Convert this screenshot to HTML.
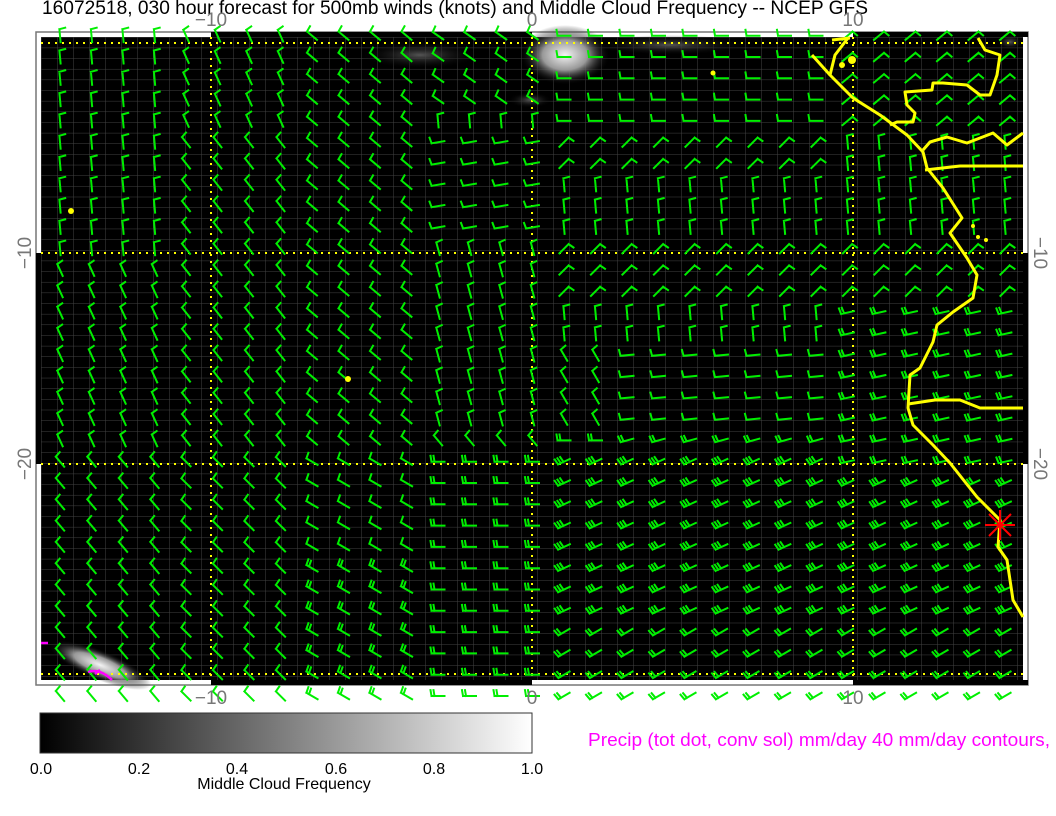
<!DOCTYPE html>
<html><head><meta charset="utf-8"><style>
html,body{margin:0;padding:0;background:#fff;width:1056px;height:816px;overflow:hidden}
svg{position:absolute;left:0;top:0}
text{font-family:"Liberation Sans",sans-serif}
</style></head><body>
<svg id="s" width="1056" height="816" viewBox="0 0 1056 816" xmlns="http://www.w3.org/2000/svg">
<defs>
<pattern id="g" width="16" height="10.65" patternUnits="userSpaceOnUse" x="41" y="37">
<path d="M0 0V10.65M0 0H16" stroke="#444" stroke-width="1" fill="none"/>
</pattern>
<radialGradient id="c1"><stop offset="0" stop-color="#f4f4f4"/><stop offset="0.5" stop-color="#999"/><stop offset="1" stop-color="#000" stop-opacity="0"/></radialGradient>
<radialGradient id="c2"><stop offset="0" stop-color="#555"/><stop offset="1" stop-color="#000" stop-opacity="0"/></radialGradient>
<linearGradient id="cb"><stop offset="0" stop-color="#000"/><stop offset="1" stop-color="#fff"/></linearGradient>
</defs>
<text x="42" y="14" font-size="19" fill="#000" textLength="826" lengthAdjust="spacingAndGlyphs">16072518, 030 hour forecast for 500mb winds (knots) and Middle Cloud Frequency -- NCEP GFS</text>
<rect x="36" y="32" width="992" height="653" fill="#fff" stroke="#777" stroke-width="1.5"/>
<rect x="41" y="37" width="982" height="643" fill="#000"/>
<rect x="211" y="32" width="321" height="5" fill="#000"/><rect x="853" y="32" width="175" height="5" fill="#000"/>
<rect x="211" y="680" width="321" height="5" fill="#000"/><rect x="853" y="680" width="175" height="5" fill="#000"/>
<rect x="36" y="253" width="5" height="211" fill="#000"/><rect x="1023" y="253" width="5" height="211" fill="#000"/>
<rect x="41" y="37" width="982" height="643" fill="url(#g)"/>
<ellipse cx="565" cy="55" rx="45" ry="30" fill="url(#c1)"/>
<ellipse cx="420" cy="55" rx="60" ry="14" fill="url(#c2)"/>
<ellipse cx="670" cy="45" rx="80" ry="10" fill="url(#c2)"/>
<ellipse cx="530" cy="100" rx="22" ry="8" fill="url(#c2)"/>
<ellipse cx="1010" cy="42" rx="14" ry="8" fill="url(#c2)"/>
<ellipse cx="100" cy="665" rx="55" ry="15" fill="url(#c1)" transform="rotate(22 100 665)"/>
<g stroke="#ffff00" stroke-width="2" stroke-dasharray="2 5" fill="none">
<path d="M211 37V680M532 37V680M853 37V680M41 43H1023M41 253H1023M41 464H1023M41 674H1023"/>
</g>
<g id="barbs" stroke="#00ee00" stroke-width="2" fill="none" stroke-linecap="square"></g>
<g stroke="#ffff00" stroke-width="3" fill="none" stroke-linejoin="round">
<polyline points="812,55 830,75 853,98 880,115 907,135 923,152 927,168 943,188 962,218 950,233 967,258 977,275 973,298 953,312 937,325 933,342 920,368 910,375 908,408 913,425 933,445 950,463 977,497 1000,520 998,547 1007,560 1013,600 1023,617"/>
<polyline points="848,38 835,55 830,75"/>
<polyline points="978,38 985,50 1000,55 997,75 990,95 980,95 967,85 943,83 933,83 932,90 905,92 907,105 915,113 913,122 897,122 890,125"/>
<polyline points="925,170 960,166 1023,166"/>
<polyline points="923,150 930,142 947,137 967,143 993,133 1007,145 1023,133"/>
<polyline points="908,404 935,400 960,400 980,408 1023,408"/>
<polyline points="832,40 850,38"/>
</g>
<g fill="#ffff00"><circle cx="71" cy="211" r="3"/><circle cx="348" cy="379" r="3"/><circle cx="713" cy="73" r="2.5"/><circle cx="973" cy="226" r="2"/><circle cx="978" cy="237" r="2"/><circle cx="986" cy="240" r="2"/><circle cx="852" cy="60" r="4"/><circle cx="842" cy="65" r="3"/></g>
<g stroke="#ff0000" stroke-width="2"><path d="M985 525H1015M1000 510V540M989 514L1011 536M989 536L1011 514"/></g>
<g stroke="#ff00ff" stroke-width="2.5" fill="none"><path d="M41 643H48M88 672Q100 668 112 680M95 674L100 670"/></g>
<g fill="#777" font-size="19" text-anchor="middle">
<text x="211" y="26">−10</text><text x="532" y="26">0</text><text x="853" y="26">10</text>
<text x="211" y="704">−10</text><text x="532" y="704">0</text><text x="853" y="704">10</text>
<text transform="translate(31 253) rotate(-90)">−10</text>
<text transform="translate(31 464) rotate(-90)">−20</text>
<text transform="translate(1034 253) rotate(90)">−10</text>
<text transform="translate(1034 464) rotate(90)">−20</text>
</g>
<rect x="40" y="713" width="492" height="40" fill="url(#cb)" stroke="#333" stroke-width="1"/>
<g font-size="16" fill="#000" text-anchor="middle">
<text x="41" y="774">0.0</text><text x="139" y="774">0.2</text><text x="237" y="774">0.4</text><text x="336" y="774">0.6</text><text x="434" y="774">0.8</text><text x="532" y="774">1.0</text>
<text x="284" y="789">Middle Cloud Frequency</text>
</g>
<text x="588" y="746" font-size="18" fill="#ff00ff" textLength="462" lengthAdjust="spacingAndGlyphs">Precip (tot dot, conv sol) mm/day 40 mm/day contours,</text>
</svg>
<script>
(function(){
var g=document.getElementById('barbs'),d='';
function field(x,y){
 if(x>830){
  if(y<140) return [-40,1];
  if(y<230) return [-95,1];
  if(y<295) return [-45,1];
  if(y<470) return [168,2];
  if(y<620) return [155,3];
  return [150,2];
 }
 if(x>540){
  if(y<135) return [180,1];
  if(y<170) return [-45,1];
  if(y<235) return [-95,1];
  if(y<295) return [-45,1];
  if(y<340) return [-95,1];
  if(y<420){ if(x<620) return [-120,1]; return [175,1];}
  if(y<460) return [x<620?180:165,2];
  if(y<620) return [155,3];
  return [150,2];
 }
 if(x>420){
  if(y<110) return [-145,1];
  if(y<130) return [-95,1];
  if(y<245) return [170,1];
  if(y<420) return [-105,1];
  if(y<460) return [-130,1];
  return [180,2];
 }
 if(x<160){
  if(y<250) return [-95,1];
  if(y<450) return [-115,1];
  return [-130,1];
 }
 if(x<300){
  if(y<140) return [-115,1];
  if(y<450) return [-128,1];
  return [-135,1];
 }
 if(y<250) return [-140,1];
 if(y<450) return [-140,1];
 return [-150,y>560?2:1];
}
for(var k=0;k<=30;k++){
 var cx=60+31.5*k;
 for(var n=-1;n<=30;n++){
  var cy=57+21.3*n;
  var f=field(cx,cy),a=f[0]*Math.PI/180,L=13;
  var dx=Math.cos(a),dy=Math.sin(a);
  var bx=cx-dx*L/2,by=cy-dy*L/2,tx=cx+dx*L/2,ty=cy+dy*L/2;
  d+='M'+bx.toFixed(1)+' '+by.toFixed(1)+'L'+tx.toFixed(1)+' '+ty.toFixed(1);
  var ba=a+80*Math.PI/180;
  for(var i=0;i<f[1];i++){
   var px=tx-dx*i*3,py=ty-dy*i*3;
   d+='M'+px.toFixed(1)+' '+py.toFixed(1)+'L'+(px+Math.cos(ba)*6).toFixed(1)+' '+(py+Math.sin(ba)*6).toFixed(1);
  }
 }
}
var p=document.createElementNS('http://www.w3.org/2000/svg','path');
p.setAttribute('d',d);g.appendChild(p);
})();
</script>
</body></html>
